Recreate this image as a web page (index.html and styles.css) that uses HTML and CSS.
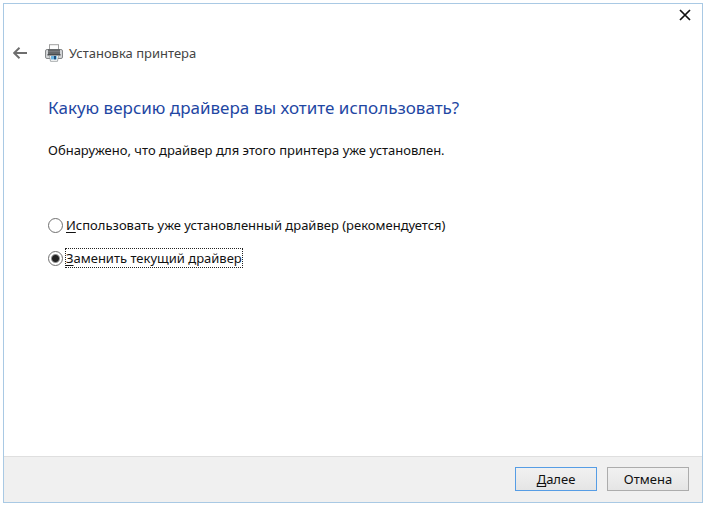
FILE: index.html
```
<!DOCTYPE html>
<html lang="ru">
    <head>
        <meta charset="utf-8">
        <title>Установка принтера</title>
        <link rel="stylesheet" href="styles.css">
    </head>
    <body>
        <form class="wizard">
            <div class="title-bar">
                <button type="button" class="close" aria-label="Закрыть">
                    <svg width="12" height="12" viewBox="0 0 12 12">
                        <path d="M1 1L11 11M11 1L1 11" fill="none" stroke="#111" stroke-width="1.7"/>
                    </svg>
                </button>
            </div>

            <header class="header">
                <button type="button" class="back" aria-label="Назад">
                    <svg width="14" height="12" viewBox="0 0 14 12">
                        <path d="M6.5 0.8L1.2 6L6.5 11.2M1.2 6H14" fill="none" stroke="#6e6e6e" stroke-width="1.9"/>
                    </svg>
                </button>
                <svg class="printer" width="18" height="18" viewBox="0 0 18 18">
                    <rect x="4.5" y="0.7" width="9" height="7" fill="#fff" stroke="#a0a0a0"/>
                    <rect x="0.5" y="5.5" width="17" height="9" rx="1.5" fill="#d3d5d7" stroke="#85888a"/>
                    <rect x="3" y="5" width="12" height="5" fill="#66696b"/>
                    <path d="M3 7.5H15" stroke="#7d8083" stroke-width="0.8"/>
                    <rect x="2.5" y="10" width="13" height="1.5" fill="#4a4d4f"/>
                    <path d="M4.5 11.5H13.5L12.5 17.3H5.5Z" fill="#fff" stroke="#8f9598" stroke-width="0.8"/>
                    <rect x="6" y="12" width="3" height="3.5" fill="#6db5e0"/>
                    <rect x="9" y="12" width="2" height="3.5" fill="#1d4f80"/>
                    <rect x="11" y="12" width="1" height="3.5" fill="#8fd0ee"/>
                </svg>
                <span>Установка принтера</span>
            </header>

            <main class="content">
                <h1>Какую версию драйвера вы хотите использовать?</h1>
                <p>Обнаружено, что драйвер для этого принтера уже установлен.</p>

                <div class="options">
                    <div class="option">
                        <input type="radio" name="driver" id="keep">
                        <label for="keep"><u>И</u>спользовать уже установленный драйвер (рекомендуется)</label>
                    </div>
                    <div class="option">
                        <input type="radio" name="driver" id="replace" checked>
                        <label for="replace"><u>З</u>аменить текущий драйвер</label>
                    </div>
                </div>
            </main>

            <footer class="footer">
                <button type="button" class="btn btn-default"><u>Д</u>алее</button>
                <button type="button" class="btn">Отмена</button>
            </footer>
        </form>
    </body>
</html>
```
FILE: styles.css
```
* {
    box-sizing: border-box;
}

body {
    margin: 0;
    padding: 3px;
    min-height: 100vh;
    display: flex;
    background-color: #fff;
    color: #111;
    font-family: "Noto Sans", "Open Sans", sans-serif;
    font-size: 13px;
    line-height: 18px;
}

.wizard {
    flex: 1;
    display: flex;
    flex-direction: column;
    border: 1px solid #a9c9e4;
}

button {
    font: inherit;
    color: inherit;
}

u {
    text-underline-offset: 2px;
}

.title-bar {
    display: flex;
    justify-content: flex-end;
    padding: 5px 11px 0;
}

.close,
.back {
    display: flex;
    border: none;
    background: none;
    padding: 0;
}

.header {
    display: flex;
    align-items: center;
    margin-top: 23px;
    padding-left: 9px;
    color: #444;
}

.printer {
    margin: 0 6px 0 18px;
}

.content {
    flex: 1;
    padding: 34px 44px 0;
}

h1 {
    margin: 0;
    font-size: 17px;
    font-weight: normal;
    line-height: 24px;
    color: #1f47a3;
}

p {
    margin: 21px 0 0;
}

.options {
    display: flex;
    flex-direction: column;
    gap: 13px;
    margin-top: 56px;
}

.option {
    display: flex;
    align-items: center;
    gap: 2px;
}

.option input {
    appearance: none;
    width: 15px;
    height: 15px;
    margin: 0;
    border: 1px solid #707070;
    border-radius: 50%;
    background-color: #fff;
}

.option input:checked {
    background-image: radial-gradient(circle, #222 3px, transparent 5px);
}

.option label {
    border: 1px dotted transparent;
}

.option input:checked + label {
    border-color: #222;
}

.footer {
    display: flex;
    justify-content: flex-end;
    gap: 10px;
    padding: 10px 13px 11px;
    border-top: 1px solid #dfdfdf;
    background-color: #f0f0f0;
}

.btn {
    width: 82px;
    height: 24px;
    padding: 0;
    border: 1px solid #acacac;
    background: linear-gradient(#f1f1f1, #e5e5e5);
}

.btn-default {
    border-color: #569de5;
}
```
